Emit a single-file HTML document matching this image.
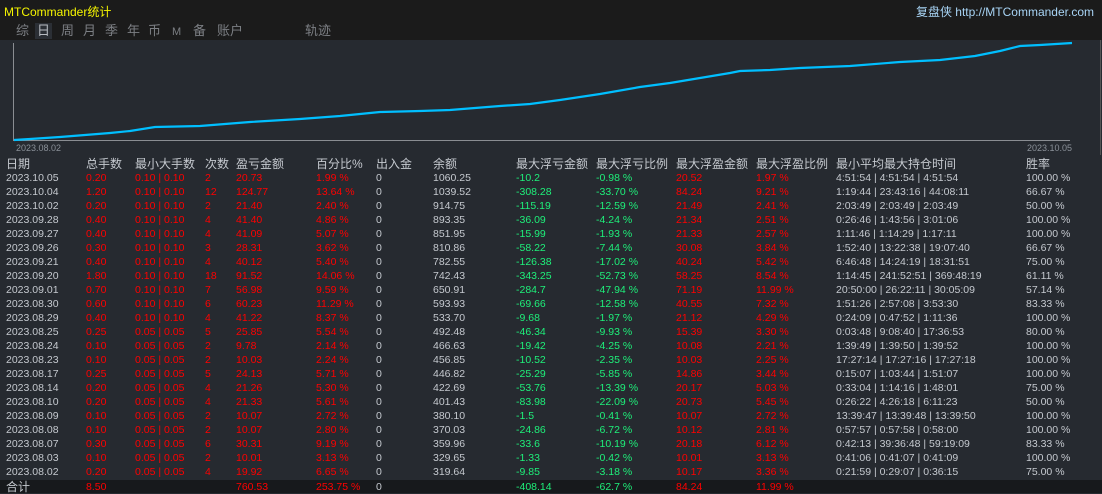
<!DOCTYPE html>
<html><head><meta charset="utf-8"><style>
*{margin:0;padding:0}
body{width:1102px;height:493px;background:#262a30;overflow:hidden;position:relative;font-family:"Liberation Sans","Noto Sans CJK SC",sans-serif;font-size:10.5px;color:#c5c9cf}
#top{position:absolute;left:0;top:0;width:1102px;height:40px;background:#1b1b1b}
#title{position:absolute;left:4px;top:3px;color:#f5f500;font-size:12px}
#site{position:absolute;right:8px;top:3px;color:#a8d4f5;font-size:12px}
.tab{position:absolute;top:23px;color:#7c7f84;font-size:13px;line-height:16px}
.sel{background:#2b2f35;color:#b8bcc2;padding:0 2px}
.r{position:absolute;left:0;width:1100px;height:14px;line-height:14px}
.r span{position:absolute;white-space:nowrap}
.a{left:6px}.b{left:86px}.c{left:135px}.d{left:205px}.e{left:236px}.f{left:316px}.g{left:376px}.h{left:433px}.i{left:516px}.j{left:596px}.k{left:676px}.l{left:756px}.m{left:836px}.n{left:1026px}
.R{color:#f00}.G{color:#1ef07a}
.hd{font-size:12px;color:#c5c9cf}
#tot{position:absolute;left:0;top:480px;width:1102px;height:13px;background:#17191c}
</style></head><body>
<div id="top"></div>
<div id="title">MTCommander统计</div>
<div id="site">复盘侠 http://MTCommander.com</div>
<span class="tab" style="left:16px">综</span>
<span class="tab sel" style="left:35px">日</span>
<span class="tab" style="left:61px">周</span>
<span class="tab" style="left:83px">月</span>
<span class="tab" style="left:105px">季</span>
<span class="tab" style="left:127px">年</span>
<span class="tab" style="left:148px">币</span>
<span class="tab" style="left:172px;font-size:11px;top:24px">M</span>
<span class="tab" style="left:193px">备</span>
<span class="tab" style="left:217px">账户</span>
<span class="tab" style="left:305px">轨迹</span>
<svg style="position:absolute;left:0;top:40px" width="1102" height="115">
<line x1="13.5" y1="3" x2="13.5" y2="101" stroke="#8a8d92" stroke-width="1"/>
<line x1="13" y1="100.5" x2="1070" y2="100.5" stroke="#8a8d92" stroke-width="1"/>
<polyline fill="none" stroke="#00bfff" stroke-width="2.2" points="14,100 30,99 60,97 110,93 130,91 155,87 200,86 250,82 300,79 340,76 380,72 420,71 450,70 500,66 530,64 560,60 600,54 640,47 670,43 700,38 730,33 740,31 770,30 800,28 850,26 900,22 940,20 975,16 1000,11 1020,6 1040,5 1072,3"/>
<line x1="1100.5" y1="0" x2="1100.5" y2="115" stroke="#555" stroke-width="1"/>
<text x="16" y="111" fill="#8a9098" font-size="9" font-family="Liberation Sans">2023.08.02</text>
<text x="1027" y="111" fill="#8a9098" font-size="9" font-family="Liberation Sans">2023.10.05</text>
</svg>
<div class="r hd" style="top:157px"><span class="a">日期</span><span class="b">总手数</span><span class="c">最小大手数</span><span class="d">次数</span><span class="e">盈亏金额</span><span class="f">百分比%</span><span class="g">出入金</span><span class="h">余额</span><span class="i">最大浮亏金额</span><span class="j">最大浮亏比例</span><span class="k">最大浮盈金额</span><span class="l">最大浮盈比例</span><span class="m">最小平均最大持仓时间</span><span class="n">胜率</span></div>
<div class="r" style="top:171px"><span class="a">2023.10.05</span><span class="b R">0.20</span><span class="c R">0.10 | 0.10</span><span class="d R">2</span><span class="e R">20.73</span><span class="f R">1.99 %</span><span class="g">0</span><span class="h">1060.25</span><span class="i G">-10.2</span><span class="j G">-0.98 %</span><span class="k R">20.52</span><span class="l R">1.97 %</span><span class="m">4:51:54 | 4:51:54 | 4:51:54</span><span class="n">100.00 %</span></div>
<div class="r" style="top:185px"><span class="a">2023.10.04</span><span class="b R">1.20</span><span class="c R">0.10 | 0.10</span><span class="d R">12</span><span class="e R">124.77</span><span class="f R">13.64 %</span><span class="g">0</span><span class="h">1039.52</span><span class="i G">-308.28</span><span class="j G">-33.70 %</span><span class="k R">84.24</span><span class="l R">9.21 %</span><span class="m">1:19:44 | 23:43:16 | 44:08:11</span><span class="n">66.67 %</span></div>
<div class="r" style="top:199px"><span class="a">2023.10.02</span><span class="b R">0.20</span><span class="c R">0.10 | 0.10</span><span class="d R">2</span><span class="e R">21.40</span><span class="f R">2.40 %</span><span class="g">0</span><span class="h">914.75</span><span class="i G">-115.19</span><span class="j G">-12.59 %</span><span class="k R">21.49</span><span class="l R">2.41 %</span><span class="m">2:03:49 | 2:03:49 | 2:03:49</span><span class="n">50.00 %</span></div>
<div class="r" style="top:213px"><span class="a">2023.09.28</span><span class="b R">0.40</span><span class="c R">0.10 | 0.10</span><span class="d R">4</span><span class="e R">41.40</span><span class="f R">4.86 %</span><span class="g">0</span><span class="h">893.35</span><span class="i G">-36.09</span><span class="j G">-4.24 %</span><span class="k R">21.34</span><span class="l R">2.51 %</span><span class="m">0:26:46 | 1:43:56 | 3:01:06</span><span class="n">100.00 %</span></div>
<div class="r" style="top:227px"><span class="a">2023.09.27</span><span class="b R">0.40</span><span class="c R">0.10 | 0.10</span><span class="d R">4</span><span class="e R">41.09</span><span class="f R">5.07 %</span><span class="g">0</span><span class="h">851.95</span><span class="i G">-15.99</span><span class="j G">-1.93 %</span><span class="k R">21.33</span><span class="l R">2.57 %</span><span class="m">1:11:46 | 1:14:29 | 1:17:11</span><span class="n">100.00 %</span></div>
<div class="r" style="top:241px"><span class="a">2023.09.26</span><span class="b R">0.30</span><span class="c R">0.10 | 0.10</span><span class="d R">3</span><span class="e R">28.31</span><span class="f R">3.62 %</span><span class="g">0</span><span class="h">810.86</span><span class="i G">-58.22</span><span class="j G">-7.44 %</span><span class="k R">30.08</span><span class="l R">3.84 %</span><span class="m">1:52:40 | 13:22:38 | 19:07:40</span><span class="n">66.67 %</span></div>
<div class="r" style="top:255px"><span class="a">2023.09.21</span><span class="b R">0.40</span><span class="c R">0.10 | 0.10</span><span class="d R">4</span><span class="e R">40.12</span><span class="f R">5.40 %</span><span class="g">0</span><span class="h">782.55</span><span class="i G">-126.38</span><span class="j G">-17.02 %</span><span class="k R">40.24</span><span class="l R">5.42 %</span><span class="m">6:46:48 | 14:24:19 | 18:31:51</span><span class="n">75.00 %</span></div>
<div class="r" style="top:269px"><span class="a">2023.09.20</span><span class="b R">1.80</span><span class="c R">0.10 | 0.10</span><span class="d R">18</span><span class="e R">91.52</span><span class="f R">14.06 %</span><span class="g">0</span><span class="h">742.43</span><span class="i G">-343.25</span><span class="j G">-52.73 %</span><span class="k R">58.25</span><span class="l R">8.54 %</span><span class="m">1:14:45 | 241:52:51 | 369:48:19</span><span class="n">61.11 %</span></div>
<div class="r" style="top:283px"><span class="a">2023.09.01</span><span class="b R">0.70</span><span class="c R">0.10 | 0.10</span><span class="d R">7</span><span class="e R">56.98</span><span class="f R">9.59 %</span><span class="g">0</span><span class="h">650.91</span><span class="i G">-284.7</span><span class="j G">-47.94 %</span><span class="k R">71.19</span><span class="l R">11.99 %</span><span class="m">20:50:00 | 26:22:11 | 30:05:09</span><span class="n">57.14 %</span></div>
<div class="r" style="top:297px"><span class="a">2023.08.30</span><span class="b R">0.60</span><span class="c R">0.10 | 0.10</span><span class="d R">6</span><span class="e R">60.23</span><span class="f R">11.29 %</span><span class="g">0</span><span class="h">593.93</span><span class="i G">-69.66</span><span class="j G">-12.58 %</span><span class="k R">40.55</span><span class="l R">7.32 %</span><span class="m">1:51:26 | 2:57:08 | 3:53:30</span><span class="n">83.33 %</span></div>
<div class="r" style="top:311px"><span class="a">2023.08.29</span><span class="b R">0.40</span><span class="c R">0.10 | 0.10</span><span class="d R">4</span><span class="e R">41.22</span><span class="f R">8.37 %</span><span class="g">0</span><span class="h">533.70</span><span class="i G">-9.68</span><span class="j G">-1.97 %</span><span class="k R">21.12</span><span class="l R">4.29 %</span><span class="m">0:24:09 | 0:47:52 | 1:11:36</span><span class="n">100.00 %</span></div>
<div class="r" style="top:325px"><span class="a">2023.08.25</span><span class="b R">0.25</span><span class="c R">0.05 | 0.05</span><span class="d R">5</span><span class="e R">25.85</span><span class="f R">5.54 %</span><span class="g">0</span><span class="h">492.48</span><span class="i G">-46.34</span><span class="j G">-9.93 %</span><span class="k R">15.39</span><span class="l R">3.30 %</span><span class="m">0:03:48 | 9:08:40 | 17:36:53</span><span class="n">80.00 %</span></div>
<div class="r" style="top:339px"><span class="a">2023.08.24</span><span class="b R">0.10</span><span class="c R">0.05 | 0.05</span><span class="d R">2</span><span class="e R">9.78</span><span class="f R">2.14 %</span><span class="g">0</span><span class="h">466.63</span><span class="i G">-19.42</span><span class="j G">-4.25 %</span><span class="k R">10.08</span><span class="l R">2.21 %</span><span class="m">1:39:49 | 1:39:50 | 1:39:52</span><span class="n">100.00 %</span></div>
<div class="r" style="top:353px"><span class="a">2023.08.23</span><span class="b R">0.10</span><span class="c R">0.05 | 0.05</span><span class="d R">2</span><span class="e R">10.03</span><span class="f R">2.24 %</span><span class="g">0</span><span class="h">456.85</span><span class="i G">-10.52</span><span class="j G">-2.35 %</span><span class="k R">10.03</span><span class="l R">2.25 %</span><span class="m">17:27:14 | 17:27:16 | 17:27:18</span><span class="n">100.00 %</span></div>
<div class="r" style="top:367px"><span class="a">2023.08.17</span><span class="b R">0.25</span><span class="c R">0.05 | 0.05</span><span class="d R">5</span><span class="e R">24.13</span><span class="f R">5.71 %</span><span class="g">0</span><span class="h">446.82</span><span class="i G">-25.29</span><span class="j G">-5.85 %</span><span class="k R">14.86</span><span class="l R">3.44 %</span><span class="m">0:15:07 | 1:03:44 | 1:51:07</span><span class="n">100.00 %</span></div>
<div class="r" style="top:381px"><span class="a">2023.08.14</span><span class="b R">0.20</span><span class="c R">0.05 | 0.05</span><span class="d R">4</span><span class="e R">21.26</span><span class="f R">5.30 %</span><span class="g">0</span><span class="h">422.69</span><span class="i G">-53.76</span><span class="j G">-13.39 %</span><span class="k R">20.17</span><span class="l R">5.03 %</span><span class="m">0:33:04 | 1:14:16 | 1:48:01</span><span class="n">75.00 %</span></div>
<div class="r" style="top:395px"><span class="a">2023.08.10</span><span class="b R">0.20</span><span class="c R">0.05 | 0.05</span><span class="d R">4</span><span class="e R">21.33</span><span class="f R">5.61 %</span><span class="g">0</span><span class="h">401.43</span><span class="i G">-83.98</span><span class="j G">-22.09 %</span><span class="k R">20.73</span><span class="l R">5.45 %</span><span class="m">0:26:22 | 4:26:18 | 6:11:23</span><span class="n">50.00 %</span></div>
<div class="r" style="top:409px"><span class="a">2023.08.09</span><span class="b R">0.10</span><span class="c R">0.05 | 0.05</span><span class="d R">2</span><span class="e R">10.07</span><span class="f R">2.72 %</span><span class="g">0</span><span class="h">380.10</span><span class="i G">-1.5</span><span class="j G">-0.41 %</span><span class="k R">10.07</span><span class="l R">2.72 %</span><span class="m">13:39:47 | 13:39:48 | 13:39:50</span><span class="n">100.00 %</span></div>
<div class="r" style="top:423px"><span class="a">2023.08.08</span><span class="b R">0.10</span><span class="c R">0.05 | 0.05</span><span class="d R">2</span><span class="e R">10.07</span><span class="f R">2.80 %</span><span class="g">0</span><span class="h">370.03</span><span class="i G">-24.86</span><span class="j G">-6.72 %</span><span class="k R">10.12</span><span class="l R">2.81 %</span><span class="m">0:57:57 | 0:57:58 | 0:58:00</span><span class="n">100.00 %</span></div>
<div class="r" style="top:437px"><span class="a">2023.08.07</span><span class="b R">0.30</span><span class="c R">0.05 | 0.05</span><span class="d R">6</span><span class="e R">30.31</span><span class="f R">9.19 %</span><span class="g">0</span><span class="h">359.96</span><span class="i G">-33.6</span><span class="j G">-10.19 %</span><span class="k R">20.18</span><span class="l R">6.12 %</span><span class="m">0:42:13 | 39:36:48 | 59:19:09</span><span class="n">83.33 %</span></div>
<div class="r" style="top:451px"><span class="a">2023.08.03</span><span class="b R">0.10</span><span class="c R">0.05 | 0.05</span><span class="d R">2</span><span class="e R">10.01</span><span class="f R">3.13 %</span><span class="g">0</span><span class="h">329.65</span><span class="i G">-1.33</span><span class="j G">-0.42 %</span><span class="k R">10.01</span><span class="l R">3.13 %</span><span class="m">0:41:06 | 0:41:07 | 0:41:09</span><span class="n">100.00 %</span></div>
<div class="r" style="top:465px"><span class="a">2023.08.02</span><span class="b R">0.20</span><span class="c R">0.05 | 0.05</span><span class="d R">4</span><span class="e R">19.92</span><span class="f R">6.65 %</span><span class="g">0</span><span class="h">319.64</span><span class="i G">-9.85</span><span class="j G">-3.18 %</span><span class="k R">10.17</span><span class="l R">3.36 %</span><span class="m">0:21:59 | 0:29:07 | 0:36:15</span><span class="n">75.00 %</span></div>
<div id="tot"></div>
<div class="r" style="top:480px"><span class="a" style="font-size:12px">合计</span><span class="b R">8.50</span><span class="e R">760.53</span><span class="f R">253.75 %</span><span class="g">0</span><span class="i G">-408.14</span><span class="j G">-62.7 %</span><span class="k R">84.24</span><span class="l R">11.99 %</span></div>
</body></html>
